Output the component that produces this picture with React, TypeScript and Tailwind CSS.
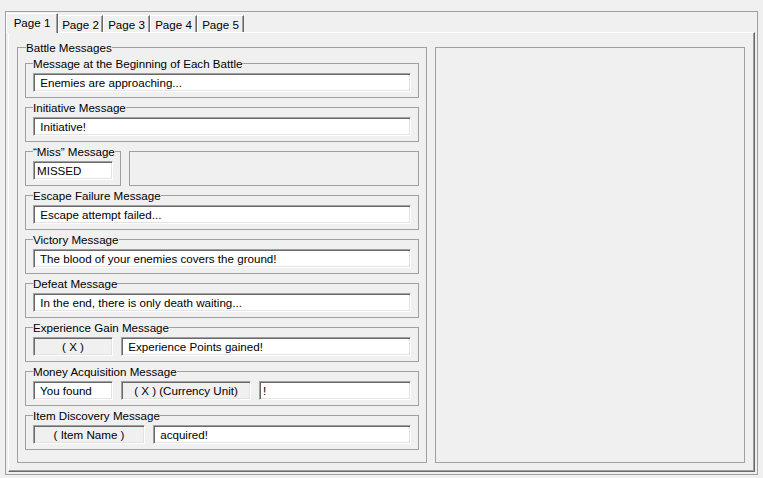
import React from "react"

const TABS = ["Page 1", "Page 2", "Page 3", "Page 4", "Page 5"]

function TextBox({ text, gray = false, className = "" }: { text: string; gray?: boolean; className?: string }) {
    return (
        <div
            className={`h-[19px] flex items-center whitespace-pre px-[3px] border border-t-[#a0a0a0] border-l-[#a0a0a0] border-b-white border-r-white shadow-[inset_1px_1px_0_#696969,inset_-1px_-1px_0_#e3e3e3] ${
                gray ? "bg-[#f0f0f0] justify-center" : "bg-white"
            } ${className}`}
        >
            {text}
        </div>
    )
}

function Group({ label, className = "w-[394px]", children }: { label: string; className?: string; children: React.ReactNode }) {
    return (
        <fieldset className={`min-w-0 border border-[#a0a0a0] px-[7px] pb-[5px] ${className}`}>
            <legend className="leading-[13px] px-0 whitespace-nowrap">{label}</legend>
            <div className="mt-[3px] flex gap-2">{children}</div>
        </fieldset>
    )
}

export default function App() {
    return (
        <div className="w-[763px] h-[478px] bg-[#f0f0f0] text-black text-[11.6px] font-['Liberation_Sans',Arial,sans-serif] pt-[11px] pl-[5px]">
            {/* outer frame */}
            <div className="w-[753px] h-[464px] border border-[#a0a0a0] pt-[1px] pl-[2px]">
                {/* tab strip */}
                <div className="flex items-end h-[19px]">
                    {TABS.map((t, i) =>
                        i === 0 ? (
                            <div
                                key={t}
                                className="relative z-10 -ml-[2px] -mb-[1px] w-[52px] h-[20px] bg-[#f0f0f0] border-t border-l border-t-white border-l-white border-r border-r-[#696969] shadow-[inset_-1px_0_0_#a0a0a0] flex justify-center pt-[2px] leading-[14px]"
                            >
                                {t}
                            </div>
                        ) : (
                            <div
                                key={t}
                                className={`h-[17px] border-t border-l border-t-white border-l-white border-r border-r-[#696969] shadow-[inset_-1px_0_0_#a0a0a0] flex justify-center pt-[2px] leading-[14px] ${
                                    i === 1 ? "w-[45px]" : "w-[47px]"
                                }`}
                            >
                                {t}
                            </div>
                        )
                    )}
                </div>

                {/* tab page */}
                <div className="w-[747px] h-[440px] border-t border-l border-t-white border-l-white border-r border-b border-r-[#696969] border-b-[#696969] shadow-[inset_-1px_-1px_0_#a0a0a0] pt-[8px] pl-[8px] flex items-start gap-2">
                    <fieldset className="w-[410px] min-w-0 border border-[#a0a0a0] px-[7px] pb-[12px]">
                        <legend className="leading-[13px] ml-[1px] whitespace-nowrap">Battle Messages</legend>
                        <div className="mt-[3px] flex flex-col gap-[3px]">
                            <Group label="Message at the Beginning of Each Battle">
                                <TextBox text=" Enemies are approaching..." className="flex-1" />
                            </Group>
                            <Group label="Initiative Message">
                                <TextBox text=" Initiative!" className="flex-1" />
                            </Group>
                            <div className="flex items-start gap-2">
                                <Group label="“Miss” Message" className="w-[96px] shrink-0">
                                    <TextBox text="MISSED" className="w-[80px]" />
                                </Group>
                                <div className="mt-[6px] h-[35px] flex-1 border border-[#a0a0a0]" />
                            </div>
                            <Group label="Escape Failure Message">
                                <TextBox text=" Escape attempt failed..." className="flex-1" />
                            </Group>
                            <Group label="Victory Message">
                                <TextBox text=" The blood of your enemies covers the ground!" className="flex-1" />
                            </Group>
                            <Group label="Defeat Message">
                                <TextBox text=" In the end, there is only death waiting..." className="flex-1" />
                            </Group>
                            <Group label="Experience Gain Message">
                                <TextBox text="( X )" gray className="w-[80px]" />
                                <TextBox text=" Experience Points gained!" className="flex-1" />
                            </Group>
                            <Group label="Money Acquisition Message">
                                <TextBox text=" You found" className="w-[80px]" />
                                <TextBox text="( X ) (Currency Unit)" gray className="w-[130px]" />
                                <TextBox text="!" className="flex-1" />
                            </Group>
                            <Group label="Item Discovery Message">
                                <TextBox text="( Item Name )" gray className="w-[112px]" />
                                <TextBox text=" acquired!" className="flex-1" />
                            </Group>
                        </div>
                    </fieldset>

                    <div className="mt-[6px] w-[310px] h-[416px] border border-[#a0a0a0]" />
                </div>
            </div>
        </div>
    )
}
